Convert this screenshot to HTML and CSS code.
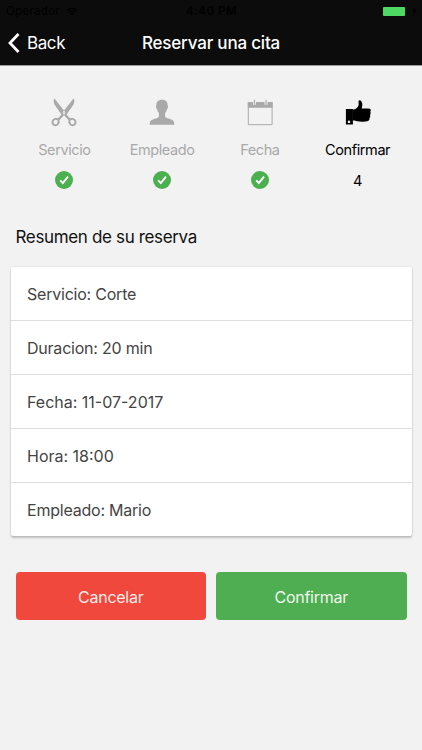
FILE: index.html
```html
<!DOCTYPE html>
<html lang="es">
<head>
  <meta charset="UTF-8">
  <meta name="viewport" content="width=device-width, initial-scale=1.0">
  <title>Reservar una cita</title>
  <link rel="stylesheet" href="styles.css">
</head>
<body>
  <header class="header">
    <div class="status-bar">
      <div class="carrier">
        <span>Operador</span>
        <svg class="wifi" viewBox="0 0 14 10" width="12" height="9">
          <path d="M1 4a8.500 8.500 0 0 1 12 0M3.200 6.200a5.400 5.400 0 0 1 7.600 0" fill="none" stroke="currentColor" stroke-width="1.700"/>
          <path d="M7 10 4.800 7.800a3.100 3.100 0 0 1 4.400 0z" fill="currentColor"/>
        </svg>
      </div>
      <span class="clock">4:40 PM</span>
      <div class="power">
        <span class="battery"></span>
        <svg viewBox="0 0 5 8" width="5" height="8"><path d="M3.500 0 0 4.500h2L1.500 8 5 3.200H3z" fill="currentColor"/></svg>
      </div>
    </div>
    <nav class="navbar">
      <a class="back" href="#">
        <svg viewBox="0 0 12 20" width="12" height="20"><path d="M10.500 1 2 10l8.500 9" fill="none" stroke="currentColor" stroke-width="2.800"/></svg>
        <span>Back</span>
      </a>
      <h1 class="title">Reservar una cita</h1>
    </nav>
  </header>

  <main class="content">
    <div class="steps">
      <div class="step">
        <svg class="step-icon" viewBox="0 0 28 30" width="28" height="30">
          <path d="M4.300 1.200c-1.100 2.300-.7 4.800.5 6.800l7.700 11 3-3.500zM23.700 1.200c1.100 2.300.7 4.800-.5 6.800l-7.700 11-3-3.500z" fill="currentColor"/>
          <path d="m14.500 16-6.500 7M13.500 16l6.500 7" stroke="currentColor" stroke-width="2.400" fill="none"/>
          <circle cx="14" cy="16.500" r=".9" fill="#f2f2f2"/>
          <ellipse cx="5.600" cy="25" rx="3" ry="3.300" transform="rotate(35 5.600 25)" fill="#f2f2f2" stroke="currentColor" stroke-width="2"/>
          <ellipse cx="22.400" cy="25" rx="3" ry="3.300" transform="rotate(-35 22.400 25)" fill="#f2f2f2" stroke="currentColor" stroke-width="2"/>
        </svg>
        <span class="step-label">Servicio</span>
        <svg class="check" viewBox="0 0 18 18" width="18" height="18"><circle cx="9" cy="9" r="9" fill="#4caf50"/><path d="m5.200 9.300 2.600 2.700 5.200-6.300" fill="none" stroke="#fff" stroke-width="1.900"/></svg>
      </div>
      <div class="step">
        <svg class="step-icon" viewBox="0 0 28 30" width="28" height="30">
          <path d="M14 2.800c-3.900 0-5.900 2.300-5.600 5.900-.8.300-.3 3 .7 3.500.3 1.700.9 2.800 1.800 3.700v2.600c0 1.800-.9 2.500-3 3.100-3.700 1-6.200 1.400-6.200 6.100h24.600c0-4.700-2.500-5.100-6.200-6.100-2.100-.6-3-1.300-3-3.100v-2.600c.9-.9 1.500-2 1.800-3.700 1-.5 1.500-3.200.7-3.500.3-3.600-1.700-5.900-5.600-5.900z" fill="currentColor"/>
        </svg>
        <span class="step-label">Empleado</span>
        <svg class="check" viewBox="0 0 18 18" width="18" height="18"><circle cx="9" cy="9" r="9" fill="#4caf50"/><path d="m5.200 9.300 2.600 2.700 5.200-6.300" fill="none" stroke="#fff" stroke-width="1.900"/></svg>
      </div>
      <div class="step">
        <svg class="step-icon" viewBox="0 0 28 30" width="28" height="30">
          <path d="M2.300 5.500h23.800v22.200H2.300z" fill="none" stroke="currentColor"/>
          <path d="M1.800 5h24.800v5.800H1.800z" fill="currentColor"/>
          <path d="M8.500 2.800v5M20 2.800v5" stroke="#f2f2f2" stroke-width="3"/>
          <path d="M8.500 2.800v5M20 2.800v5" stroke="currentColor" stroke-width="1.200"/>
        </svg>
        <span class="step-label">Fecha</span>
        <svg class="check" viewBox="0 0 18 18" width="18" height="18"><circle cx="9" cy="9" r="9" fill="#4caf50"/><path d="m5.200 9.300 2.600 2.700 5.200-6.300" fill="none" stroke="#fff" stroke-width="1.900"/></svg>
      </div>
      <div class="step active">
        <svg class="step-icon" viewBox="0 0 28 30" width="28" height="30">
          <path fill-rule="evenodd" d="M1.900 12h7v15.600h-7zM5 23.500a1.300 1.300 0 1 0 .01 0z" fill="currentColor"/>
          <path d="M8.600 12.800c3-.6 5.500-2.400 6-4.600.4-1.700-.6-3.900.3-4.700 1.300-1.100 3.300 1.100 3.400 3.600.1 1.900-.4 3.300-.6 4.500 2.400-.2 6.200-.4 8 .1 1.300.5 1.400 2.100.5 3 .8.900.6 2.500-.2 3.200.5 1.200.3 2.500-.6 3.100.3 1.200-.1 2.300-1 2.700-2.600 1.100-7.800 1.300-11 .6-1.500-.3-2.600-.8-4.800-.8z" fill="currentColor"/>
        </svg>
        <span class="step-label">Confirmar</span>
        <span class="step-number">4</span>
      </div>
    </div>

    <h2 class="summary-title">Resumen de su reserva</h2>
    <ul class="card">
      <li>Servicio: Corte</li>
      <li>Duracion: 20 min</li>
      <li class="numeric">Fecha: 11-07-2017</li>
      <li class="numeric">Hora: 18:00</li>
      <li>Empleado: Mario</li>
    </ul>

    <div class="actions">
      <button class="btn btn-cancel">Cancelar</button>
      <button class="btn btn-confirm">Confirmar</button>
    </div>
  </main>
</body>
</html>
```

FILE: styles.css
```css
* {
  box-sizing: border-box;
}
body {
  margin: 0;
  min-height: 750px;
  background-color: #f2f2f2;
  color: #111;
  font-family: Inter, "Liberation Sans", sans-serif;
  font-size: 16px;
}
.header {
  height: 66px;
  background-color: #0c0c0c;
  border-bottom: 1px solid #9a9a9a;
}
.status-bar {
  display: grid;
  grid-template-columns: 1fr auto 1fr;
  align-items: center;
  height: 22px;
  padding: 0 5px 0 6px;
  color: #000;
  font-size: 11.5px;
  letter-spacing: 0.3px;
}
.carrier {
  display: flex;
  align-items: center;
  gap: 6px;
}
.clock {
  font-weight: 600;
  letter-spacing: 0.5px;
}
.power {
  display: flex;
  align-items: center;
  justify-content: flex-end;
  gap: 7px;
}
.battery {
  width: 22px;
  height: 9px;
  background-color: #4cd964;
  border-radius: 1px;
}
.navbar {
  display: grid;
  grid-template-columns: 1fr auto 1fr;
  align-items: center;
  height: 42px;
  padding: 0 8px;
  color: #fff;
}
.back {
  display: flex;
  align-items: center;
  gap: 7px;
  color: #fff;
  font-size: 17px;
  letter-spacing: -0.4px;
  text-decoration: none;
}
.title {
  margin: 0;
  font-size: 17px;
  font-weight: 500;
  letter-spacing: -0.2px;
}
.steps {
  display: grid;
  grid-template-columns: repeat(4, 1fr);
  padding: 31px 15.5px 0;
}
.step {
  display: flex;
  flex-direction: column;
  align-items: center;
  color: #a9a9a9;
}
.step.active {
  color: #000;
}
.step-label {
  margin-top: 13px;
  font-size: 14.5px;
  line-height: 20px;
  letter-spacing: -0.4px;
}
.check {
  margin-top: 11px;
}
.step-number {
  margin-top: 11px;
  font-size: 14.5px;
  line-height: 20px;
}
.summary-title {
  margin: 35px 15.5px 19px;
  font-size: 17px;
  font-weight: 400;
  line-height: 22px;
  letter-spacing: -0.35px;
}
.card {
  margin: 0 10.5px;
  padding: 0;
  list-style: none;
  background-color: #fff;
  border-radius: 2px;
  box-shadow: 0 2px 2px rgba(0,0,0,0.2), 0 0 2px rgba(0,0,0,0.15);
}
.card li {
  display: flex;
  align-items: center;
  height: 54px;
  padding: 0 16.5px;
  border-bottom: 1px solid #dedede;
  color: #444;
  font-size: 16px;
  letter-spacing: -0.22px;
}
.card .numeric {
  letter-spacing: 0;
}
.card li:last-child {
  height: 53px;
  border-bottom: none;
}
.actions {
  display: grid;
  grid-template-columns: 1fr 1fr;
  gap: 10px;
  padding: 36px 15.5px;
}
.btn {
  height: 48px;
  padding-top: 2px;
  border: none;
  border-radius: 4px;
  color: rgba(255,255,255,0.93);
  font-family: inherit;
  font-size: 16px;
  letter-spacing: -0.25px;
}
.btn-cancel {
  background-color: #f0483c;
}
.btn-confirm {
  background-color: #4fae51;
}
```
